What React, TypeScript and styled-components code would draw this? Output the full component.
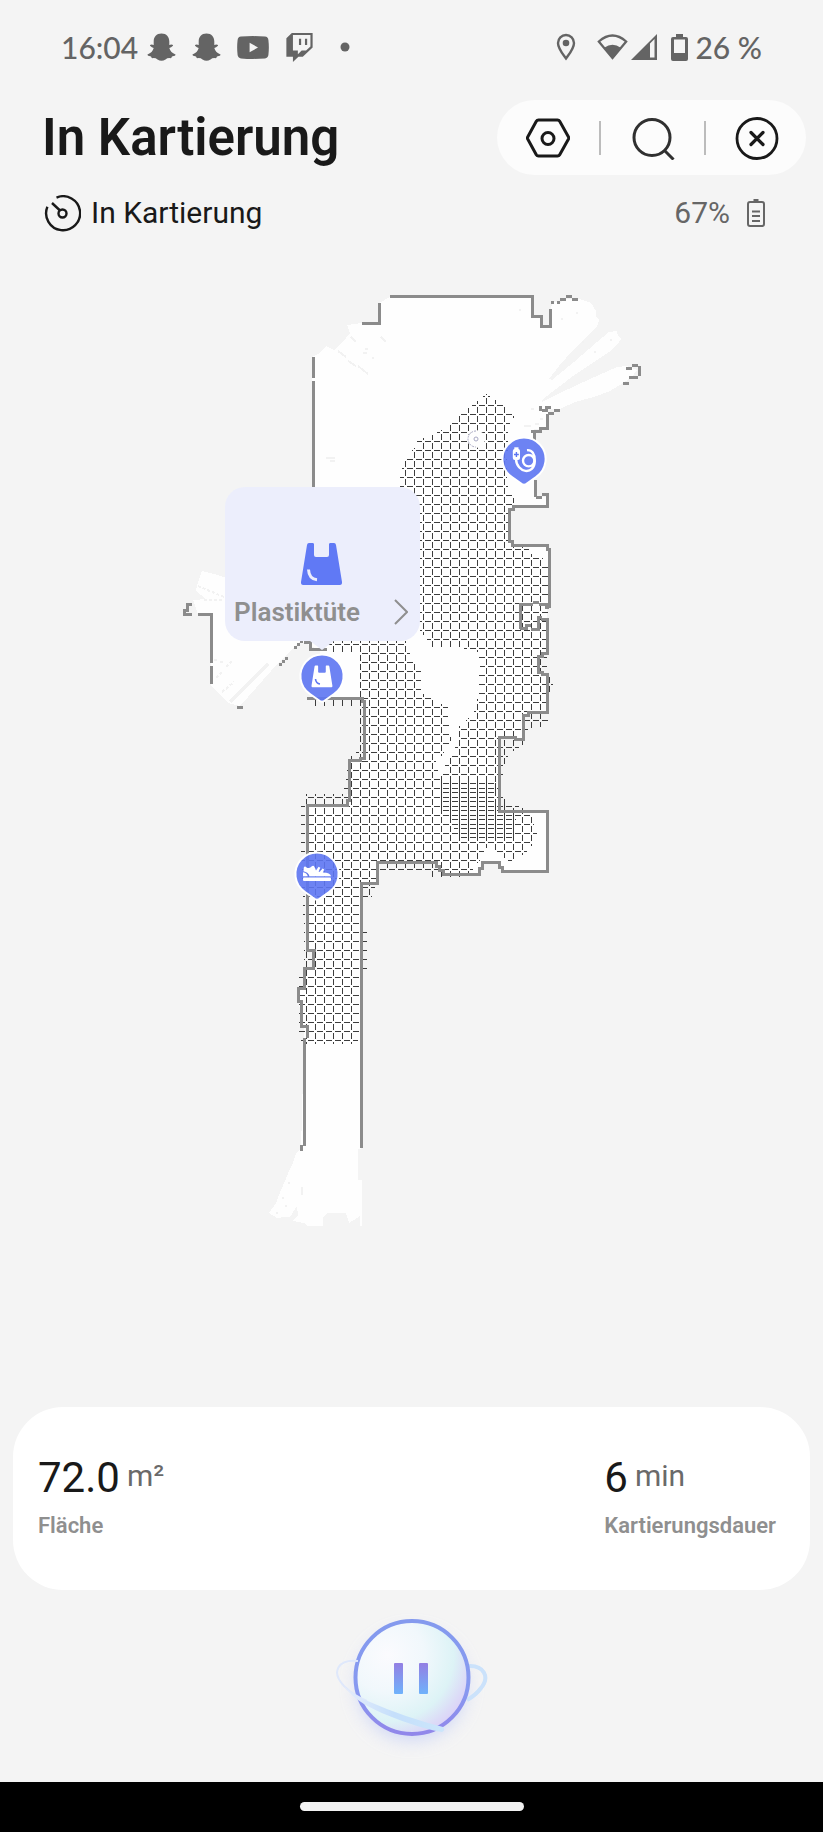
import React from "react";
import styled, { createGlobalStyle } from "styled-components";
import { FaTwitch } from "react-icons/fa6";

const GlobalStyle = createGlobalStyle`
  * { box-sizing: border-box; }
  body { margin: 0; background: #f4f4f4; font-family: Roboto, sans-serif; color: #191919; }
  button { border: 0; padding: 0; background: none; font: inherit; color: inherit; cursor: pointer; }
  svg { display: block; flex: none; }
`;

const Page = styled.div`
  min-height: 100vh;
  display: flex;
  flex-direction: column;
`;

const StatusBar = styled.div`
  height: 94px;
  padding: 0 61px;
  display: flex;
  align-items: center;
  justify-content: space-between;
  color: #646464;
  font: 500 30px/32px Lato, sans-serif;
`;

const StatusGroup = styled.div<{ $gap: number }>`
  display: flex;
  align-items: center;
  gap: ${(p) => p.$gap}px;
`;

const Header = styled.header`
  margin: 6px 17px 0 42px;
  display: flex;
  align-items: center;
  justify-content: space-between;
`;

const Title = styled.h1`
  margin: 0;
  font-size: 51px;
  line-height: 60px;
  font-weight: 600;
`;

const Toolbar = styled.div`
  width: 309px;
  height: 75px;
  padding: 0 27px 0 29px;
  border-radius: 38px;
  background: #fcfcfc;
  display: flex;
  align-items: center;
  justify-content: space-between;
`;

const ToolButton = styled.button`
  width: 44px;
  height: 44px;
`;

const Divider = styled.span`
  width: 2px;
  height: 34px;
  background: #bcbcbc;
`;

const StateRow = styled.div`
  margin-top: 18px;
  padding: 0 58px 0 44px;
  height: 40px;
  display: flex;
  align-items: center;
  justify-content: space-between;
  font-size: 30px;
  line-height: 40px;
`;

const State = styled.div<{ $gap: number; $muted?: boolean }>`
  display: flex;
  align-items: center;
  gap: ${(p) => p.$gap}px;
  color: ${(p) => (p.$muted ? "#666" : "#191919")};
`;

const MapArea = styled.main`
  flex: 1;
  padding: 47px 0 167px;
  display: flex;
  justify-content: center;
`;

const MapCanvas = styled.div`
  position: relative;
  width: 503px;
  height: 960px;
`;

const Pin = styled.button<{ $x: number; $y: number }>`
  position: absolute;
  left: ${(p) => p.$x}px;
  top: ${(p) => p.$y}px;
  width: 48px;
  height: 52px;
`;

const Popup = styled.button`
  position: absolute;
  left: 65px;
  top: 207px;
  width: 195px;
  height: 154px;
  padding: 56px 12px 9px 9px;
  border-radius: 20px;
  background: #eceefc;
  display: flex;
  flex-direction: column;
  justify-content: space-between;
  align-items: center;

  &::after {
    content: "";
    position: absolute;
    left: 85px;
    top: 100%;
    border: 12px solid transparent;
    border-top: 9px solid #eceefc;
    border-bottom: 0;
  }
`;

const PopupLabel = styled.span`
  width: 100%;
  display: flex;
  align-items: center;
  justify-content: space-between;
  font-size: 26px;
  line-height: 40px;
  font-weight: 600;
  color: #8f8f8f;
`;

const StatsCard = styled.section`
  margin: 0 13px;
  padding: 46px 34px 46px 25px;
  min-height: 183px;
  border-radius: 50px;
  background: #fff;
  display: flex;
  justify-content: space-between;
`;

const Stat = styled.div`
  display: flex;
  flex-direction: column;
`;

const StatValue = styled.div`
  display: flex;
  gap: 7px;
  font-size: 42px;
  line-height: 50px;
`;

const Unit = styled.span`
  font-size: 30px;
  line-height: 46px;
  color: #6a6a6a;
`;

const StatLabel = styled.div`
  margin-top: 6px;
  font-size: 22px;
  line-height: 34px;
  font-weight: 600;
  color: #8f8f8f;
`;

const Controls = styled.div`
  padding: 10px 0 22px;
  display: flex;
  justify-content: center;
`;

const PauseButton = styled.button`
  width: 203px;
  height: 160px;
`;

const NavBar = styled.footer`
  height: 50px;
  background: #000;
  display: flex;
  align-items: center;
  justify-content: center;
`;

const NavHandle = styled.span`
  width: 224px;
  height: 9px;
  margin-bottom: 1px;
  border-radius: 5px;
  background: #f2f2f2;
`;

const GhostIcon = () => (
  <svg width="29" height="28" viewBox="0 0 29 28">
    <path fill="currentColor" d="M14.500.5C19.500.5 22.300 4 22.300 8.500V12Q24.500 11 26 12Q26.500 13.200 22.300 15Q23.500 19.500 28.500 21.500Q29 22.800 25 23.500Q24.600 25.200 23.500 25.200Q20.500 24.800 18.500 26.500Q16.500 27.700 14.500 27.700Q12.500 27.700 10.500 26.500Q8.500 24.800 5.500 25.200Q4.400 25.200 4 23.500Q0 22.800.5 21.500Q5.500 19.500 6.700 15Q2.500 13.200 3 12Q4.500 11 6.700 12V8.500C6.700 4 9.500.5 14.500.5Z" />
  </svg>
);

const YoutubeIcon = () => (
  <svg width="32" height="23" viewBox="0 0 32 23">
    <path fillRule="evenodd" fill="currentColor" d="M4 .6Q16-.4 28 .6 31 1 31.400 4Q32.300 11.500 31.400 19 31 22 28 22.400 16 23.400 4 22.400 1 22 .6 19-.3 11.500.6 4 1 1 4 .6ZM12.600 6.700V16.300L21 11.500Z" />
  </svg>
);

const PlaceIcon = () => (
  <svg width="20" height="28" viewBox="0 0 20 28" fill="none" stroke="currentColor" strokeWidth="2.400">
    <path d="M10 25.500C6 20 2 15.500 2 10A8 8 0 0 1 18 10C18 15.500 14 20 10 25.500Z" />
    <circle cx="10" cy="10" r="3.300" fill="currentColor" stroke="none" />
  </svg>
);

const WifiIcon = () => (
  <svg width="31" height="26" viewBox="0 0 31 26">
    <path d="M1.800 7.500Q15.500-4.500 29.200 7.500L15.500 24Z" fill="none" stroke="currentColor" strokeWidth="2.200" />
    <path d="M7.200 13.800Q15.500 7.500 23.800 13.800L15.500 25Z" fill="currentColor" />
  </svg>
);

const SignalIcon = () => (
  <svg width="26" height="26" viewBox="0 0 26 26">
    <path fillRule="evenodd" d="M0 26L26 0V26ZM19 9.500V23.500H23.500V5Z" fill="currentColor" />
  </svg>
);

const PhoneBatteryIcon = () => (
  <svg width="17" height="27" viewBox="0 0 17 27">
    <path fillRule="evenodd" d="M5 0H12V3H15Q17 3 17 5V25Q17 27 15 27H2Q0 27 0 25V5Q0 3 2 3H5ZM3 5.500V19H14V5.500Z" fill="currentColor" />
  </svg>
);

const SettingsIcon = () => (
  <svg width="44" height="44" viewBox="0 0 44 44" fill="none" stroke="#191919" strokeWidth="3" strokeLinejoin="round">
    <path d="M12.500 4H31.500Q33 4 33.700 5.200L42.500 21Q43 22 42.500 23L33.700 38.800Q33 40 31.500 40H12.500Q11 40 10.300 38.800L1.700 23Q1.200 22 1.700 21L10.300 5.200Q11 4 12.500 4Z" />
    <circle cx="22" cy="22.500" r="6" />
  </svg>
);

const SearchIcon = () => (
  <svg width="44" height="44" viewBox="0 0 44 44" fill="none" stroke="#303030" strokeWidth="3">
    <circle cx="21" cy="21.500" r="18" />
    <path d="M33 34L42.500 43.500" />
  </svg>
);

const CloseIcon = () => (
  <svg width="44" height="44" viewBox="0 0 44 44" fill="none" stroke="#191919" strokeWidth="2.800" strokeLinecap="round">
    <circle cx="22" cy="22.500" r="20" />
    <path strokeWidth="3.200" d="M16 16.500L28 28.500M28 16.500L16 28.500" />
  </svg>
);

const GaugeIcon = () => (
  <svg width="37" height="37" viewBox="0 0 37 37" fill="none" stroke="#191919" strokeWidth="2.400">
    <path d="M12.500 2.600A17 17 0 1 1 3.400 11.800M8 8L16 15.500" />
    <circle cx="18.500" cy="18.500" r="4" />
  </svg>
);

const RobotBatteryIcon = () => (
  <svg width="18" height="28" viewBox="0 0 18 28" fill="none" stroke="#666" strokeWidth="2">
    <path d="M6.500 1H11.500" />
    <rect x="1" y="3" width="16" height="24" rx="2" />
    <path d="M5 12.500H13M5 17H13M5 22H13" />
  </svg>
);

const BAG = "M6 2Q6.300 0 8 0H12Q13 0 13 1.500V12Q13 14 15 14H26Q28 14 28 12V1.500Q28 0 29 0H33Q34.700 0 35 2L41 39Q41.300 42 39 42H2Q-.3 42 0 39Z";

const BagIcon = () => (
  <svg width="41" height="42" viewBox="0 0 41 42">
    <path d={BAG} fill="#6079f5" />
    <path d="M7.500 26.500Q8 36 16 36.800" fill="none" stroke="#eceefc" strokeWidth="3" />
  </svg>
);

const PinShape = ({ children }: { children: React.ReactNode }) => (
  <svg width="48" height="52" viewBox="0 0 48 52">
    <path d="M12 42A21.600 21.600 0 1 1 36 42L26.500 48.800Q24 50.500 21.500 48.800Z" fill="#5d76f2" fillOpacity=".9" stroke="#fff" strokeWidth="2" />
    {children}
  </svg>
);

const CableGlyph = () => (
  <g fill="none" stroke="#fff" strokeWidth="2.400">
    <path d="M16 24C16.500 38 34.500 41 34.800 26C35 19 32 14.800 27 15.200" />
    <circle cx="28.700" cy="25.700" r="5.700" />
    <rect x="12.800" y="14" width="7.200" height="11" rx="2" fill="#fff" stroke="none" />
    <rect x="14.300" y="12.300" width="4.200" height="3" fill="#fff" stroke="none" />
    <path d="M16.400 17V22M14 19.500H18.800" stroke="#5d76f2" strokeWidth="1.400" />
  </g>
);

const BagGlyph = () => (
  <g>
    <path transform="translate(13.500 13.500) scale(.51 .52)" d={BAG} fill="#fff" />
    <path d="M17.500 27Q18 31.500 22 32" fill="none" stroke="#5d76f2" strokeWidth="1.600" />
  </g>
);

const ShoeGlyph = () => (
  <g fill="#fff">
    <path d="M10.800 17.500Q11.800 15.600 13.600 17.500Q16 19 18.500 16.500Q20.500 15 21.500 17L23 20.500L25.600 16.800L27.300 17.800L25.600 21.500L26.600 22L29.500 18.500L31.200 19.500L29.800 22.600Q37.500 22.800 38 26.300H16.500Q15.500 22.300 10.500 21.200Z" />
    <path d="M10 22.300Q14 22.800 14.800 26.300H10Z" />
    <rect x="10" y="27.600" width="28" height="3.400" rx="1" />
  </g>
);

const FLOOR =
  "M390 297H532V317H541V327H551V307L554 302L560 303L566 299L580 299L591 303L596 311V317L599 320L597 327L590 333L573 350L559 366L549 379L552 380L574 362L597 342L609 332L617 331L618 336L621 339L617 345L609 352L594 362L573 376L543 399L542 402L560 393L590 379L617 367L627 366L637 370L632 377L623 383L610 391L594 397L575 402L560 409H548V429H534V497H547V506H513L508 511V540L513 545H549V606H547V653L538 657V672L547 675V712H528L523 717V739H499V811H547V871H502L498 862H482L479 874H443L434 862H377V883H361V1149H358V1180H362V1226H360V1215L357 1218L349 1223L346 1213H328L323 1217V1226H307L304 1223L293 1221L298 1215L297 1206L290 1217H284L277 1218L269 1213L276 1203L279 1195L285 1181L289 1171L293 1163L296 1153L301 1149L304 1040V1028L298 1000V988L304 985V968H313V950H307V805H347L349 760L364 758V698H320V650L300 641L279 662L240 706L228 703L211 685V614H198L193 600L206 599L196 591L197 586L202 571L218 575L226 578H312V357L320 353L326 346L334 350L343 342L350 333L347 325L362 323H379V303Z";

const GRID_UPPER =
  "M486 394L502 404L514 417L508 428L507 484L516 503L508 511V540L527 547L533 556L542 557L549 567V604L547 673L553 683V691L547 695V713L548 722L540 727L529 728L523 745L513 751L505 760L504 773L497 780L494 802L507 803L516 817L515 840H459L450 821L441 812V774L450 757L458 743V727L468 719L477 707L480 660L477 650L460 648H433L420 630H400V477L405 460L415 447L418 440L432 435L442 430L460 415L477 401Z";

const GRID_LOWER =
  "M327 641H406L413 662L421 672V692L433 700L448 707V720L451 740L443 755L435 762L441 780H494L506 802L523 808L532 817L537 833L532 845L525 854L510 862L495 851L486 848L480 860L470 873L458 878H433L428 870H380L372 897H362V926H367V970H362L358 1044H304L298 1038V980L304 968V930L301 853V806H306V794H343L350 757L359 750V707H307V698H360V653H330Z";

const WALLS =
  "M390 296H532V316H541V326H550V309M551 302H554M557 302H560M560 299H566M566 296H572M572 299H578M362 323H379V303M313 357V378M313 381V490" +
  "M626 368H632M632 365H638M639 366V376M629 377H638M623 383H629M540 406V411M545 407H551M542 410H548M554 410H560M548 413H554M547 414V430M539 428H547M531 431H542M534 430V440" +
  "M535 480V497M536 497H542M542 494H547M547 493V506H513V509H509V541H512V545H547V549H549V608M545 607H549M520 629V604H533M533 602H539M539 604H549M520 628H528M525 625H531M531 629H538V617M537 617H542M541 619H547V653H542V656H538V672H542V674H547V712H528V715H523V739H515V737H499V811H547V871H502V867H499V862H482V868H479V874H443V870H439V866H436V862H377V883H361V1148" +
  "M304 642H312M310 642V649H327M307 698H362V701H364V758H360V760H349V800H347V805H307V950H316M313 950V968H304V988H298V1001H301V1026H307V1038M304 1038V1146M301 1145V1151" +
  "M186 604H192M187 604V610H184V614H192M198 614H211V663M211 666V684M237 707H243M279 664H282M282 661H285M285 658H288M294 647H297M297 644H300M300 641H303";

const FloorPlan = () => (
  <svg width="503" height="960" viewBox="160 280 503 960">
    <defs>
      <pattern id="tracks-upper" width="9" height="9" patternUnits="userSpaceOnUse">
        <rect x="0" y="2" width="1" height="6" fill="#3c3c3c" />
        <rect x="2" y="0" width="6" height="1" fill="#3c3c3c" />
      </pattern>
      <pattern id="tracks-lower" y="5" width="9" height="9" patternUnits="userSpaceOnUse">
        <rect x="0" y="2" width="1" height="6" fill="#3c3c3c" />
        <rect x="2" y="0" width="6" height="1" fill="#3c3c3c" />
      </pattern>
    </defs>
    <g shapeRendering="crispEdges">
      <path d={FLOOR} fill="#fefefe" />
      <g fill="none" stroke="#f2f2f2" strokeWidth="2">
        <path d="M338 351L346 357M348 361L356 366M358 366L368 374M351 337L356 342M381 337L386 342M363 353H367M365 349H368M372 358H374M326 458H335M330 461H335M519 310H521M561 319H563M576 313H578M582 342H584M594 352H596M610 340H612M531 409H534M524 426H531M535 424H539M540 419H543" />
        <path d="M198 586L224 597M204 600H224M216 678L222 672M226 667L232 661M222 692L234 682M214 660H217M220 662H223" strokeDasharray="3 2" />
        <path d="M230 702L268 664" strokeWidth="4" />
        <path d="M302 1187V1195M288 1183H290M282 1198H284M285 1206H287M276 1213H278" />
      </g>
      <path d={GRID_UPPER} fill="url(#tracks-upper)" />
      <path d={GRID_LOWER} fill="url(#tracks-lower)" />
      <path d={WALLS} fill="none" stroke="#8b8b8b" strokeWidth="3" />
    </g>
    <circle cx="476" cy="439" r="9" fill="#fefefe" />
    <path d="M476 431A8 8 0 0 0 476 447" fill="none" stroke="#a9a9c4" strokeDasharray="2 1" />
    <circle cx="476" cy="439" r="2" fill="none" stroke="#a9a9c4" />
  </svg>
);

const PauseArt = () => (
  <svg width="203" height="160" viewBox="0 0 203 160">
    <defs>
      <radialGradient id="orb" cx=".28" cy=".3" r=".82">
        <stop offset="0" stopColor="#fbfbfe" />
        <stop offset=".4" stopColor="#f1f8fc" />
        <stop offset=".72" stopColor="#ddf3f6" />
        <stop offset=".88" stopColor="#dcdcf7" />
        <stop offset="1" stopColor="#dccdf8" />
      </radialGradient>
      <linearGradient id="rim" x1="0" y1="0" x2="0" y2="1">
        <stop offset="0" stopColor="#849aee" />
        <stop offset=".6" stopColor="#8799f0" />
        <stop offset="1" stopColor="#9187ea" />
      </linearGradient>
      <linearGradient id="bars" x1="0" y1="0" x2="0" y2="1">
        <stop offset="0" stopColor="#937fe3" />
        <stop offset="1" stopColor="#6fb2fb" />
      </linearGradient>
      <linearGradient id="orbit" x1="0" y1="0" x2="1" y2="0">
        <stop offset="0" stopColor="#e6edfb" />
        <stop offset=".5" stopColor="#c5dffb" />
        <stop offset="1" stopColor="#cbe6fb" />
      </linearGradient>
      <filter id="glow" x="-40%" y="-40%" width="180%" height="180%">
        <feGaussianBlur stdDeviation="9" />
      </filter>
      <filter id="soft">
        <feGaussianBlur stdDeviation=".5" />
      </filter>
    </defs>
    <circle cx="102" cy="86" r="54" fill="#b9c6f8" opacity=".65" filter="url(#glow)" />
    <path d="M158 66C174 65 180 77 171 88Q166 95 157 100" fill="none" stroke="#cbe2fb" strokeWidth="4" filter="url(#soft)" />
    <circle cx="102" cy="77.500" r="56.500" fill="url(#orb)" stroke="url(#rim)" strokeWidth="4" />
    <path d="M48 61C29 59 20 71 34 86Q44 96 57 101" fill="none" stroke="#dfe8fb" strokeWidth="2" filter="url(#soft)" />
    <path d="M34 86Q44 96 60 102Q94 117 133 127Q136 130 132 132C109 128 75 116 54 104Q42 97 34 86Z" fill="url(#orbit)" filter="url(#soft)" />
    <rect x="84" y="63" width="9" height="31" rx="1" fill="url(#bars)" />
    <rect x="109" y="63" width="9" height="31" rx="1" fill="url(#bars)" />
  </svg>
);

export default function App() {
  return (
    <Page>
      <GlobalStyle />
      <StatusBar>
        <StatusGroup $gap={16}>
          <StatusGroup $gap={9}>
            <span>16:04</span>
            <GhostIcon />
          </StatusGroup>
          <GhostIcon />
          <YoutubeIcon />
          <FaTwitch size={29} />
          <svg width="36" height="10" viewBox="0 0 36 10">
            <circle cx="15" cy="5" r="4.500" fill="currentColor" />
          </svg>
        </StatusGroup>
        <StatusGroup $gap={21}>
          <PlaceIcon />
          <StatusGroup $gap={14}>
            <StatusGroup $gap={3}>
              <WifiIcon />
              <SignalIcon />
            </StatusGroup>
            <StatusGroup $gap={7}>
              <PhoneBatteryIcon />
              <span>26 %</span>
            </StatusGroup>
          </StatusGroup>
        </StatusGroup>
      </StatusBar>

      <Header>
        <Title>In Kartierung</Title>
        <Toolbar>
          <ToolButton aria-label="Einstellungen"><SettingsIcon /></ToolButton>
          <Divider />
          <ToolButton aria-label="Suchen"><SearchIcon /></ToolButton>
          <Divider />
          <ToolButton aria-label="Schließen"><CloseIcon /></ToolButton>
        </Toolbar>
      </Header>

      <StateRow>
        <State $gap={10}>
          <GaugeIcon />
          <span>In Kartierung</span>
        </State>
        <State $gap={17} $muted>
          <span>67%</span>
          <RobotBatteryIcon />
        </State>
      </StateRow>

      <MapArea>
        <MapCanvas>
          <FloorPlan />
          <Pin $x={340} $y={155} aria-label="Kabel"><PinShape><CableGlyph /></PinShape></Pin>
          <Pin $x={138} $y={372} aria-label="Plastiktüte"><PinShape><BagGlyph /></PinShape></Pin>
          <Pin $x={133} $y={570} aria-label="Schuh"><PinShape><ShoeGlyph /></PinShape></Pin>
          <Popup>
            <BagIcon />
            <PopupLabel>
              Plastiktüte
              <svg width="14" height="26" viewBox="0 0 14 26" fill="none" stroke="#8f8f8f" strokeWidth="2">
                <path d="M1 1L13 13L1 25" />
              </svg>
            </PopupLabel>
          </Popup>
        </MapCanvas>
      </MapArea>

      <StatsCard>
        <Stat>
          <StatValue>72.0<Unit>m²</Unit></StatValue>
          <StatLabel>Fläche</StatLabel>
        </Stat>
        <Stat>
          <StatValue>6<Unit>min</Unit></StatValue>
          <StatLabel>Kartierungsdauer</StatLabel>
        </Stat>
      </StatsCard>

      <Controls>
        <PauseButton aria-label="Pause"><PauseArt /></PauseButton>
      </Controls>

      <NavBar><NavHandle /></NavBar>
    </Page>
  );
}
